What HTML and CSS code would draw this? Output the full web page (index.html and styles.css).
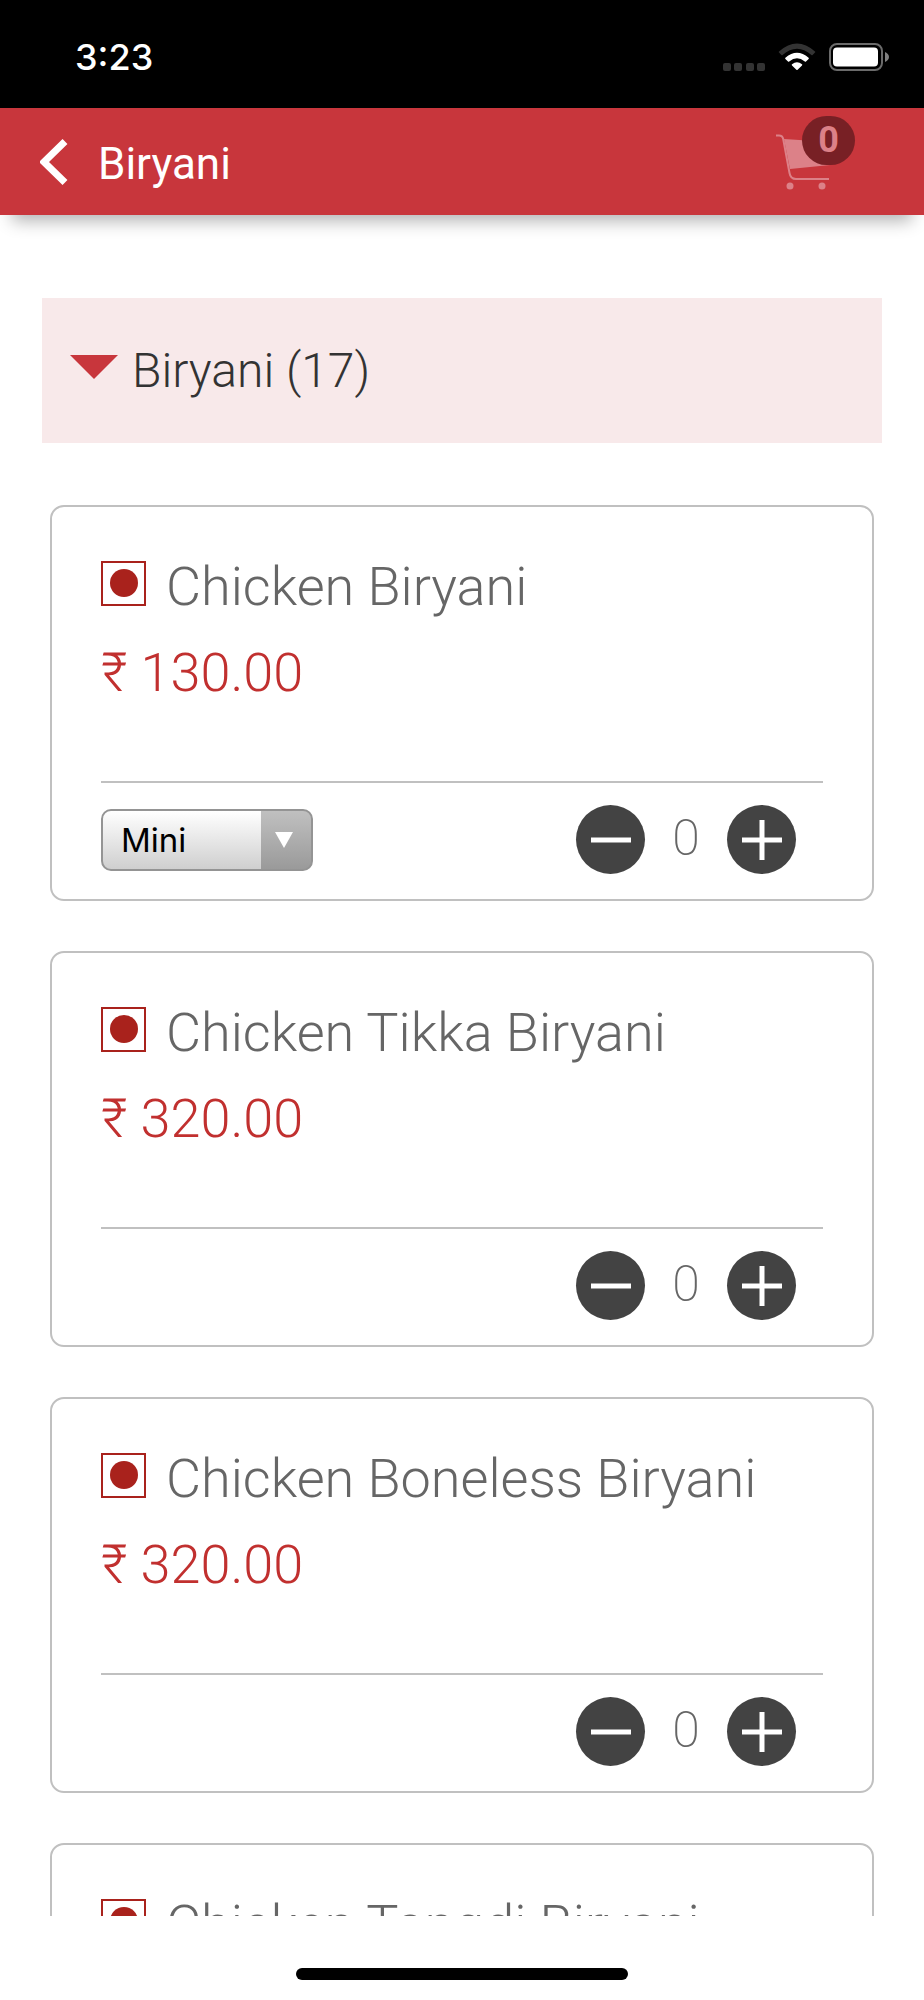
FILE: index.html
```html
<!DOCTYPE html>
<html lang="en">
  <head>
    <meta charset="UTF-8" />
    <meta name="viewport" content="width=device-width, initial-scale=1.0" />
    <title>Biryani</title>
    <link rel="stylesheet" href="styles.css">
  </head>
  <body>
    <div class="status-bar">
      <span class="time">3:23</span>
      <div class="status-icons">
        <svg class="signal" viewBox="0 0 42 8" aria-hidden="true">
          <rect x="0" width="8" height="8" rx="2" />
          <rect x="11" width="8" height="8" rx="2" />
          <rect x="23" width="8" height="8" rx="2" />
          <rect x="34" width="8" height="8" rx="2" />
        </svg>
        <svg class="wifi" viewBox="0 0 38 28" aria-hidden="true">
          <path d="M1 8.500Q19 -7.500 37 8.500Q37.600 9 37 9.600L34.600 12Q34 12.600 33.400 12Q19 -0.500 4.600 12Q4 12.600 3.400 12L1 9.600Q0.400 9 1 8.500Z" fill="#333333" />
          <path d="M7.400 14.800Q19 4.600 30.600 14.800Q31.200 15.400 30.600 16L28 18.600Q27.400 19 26.800 18.500Q19 12 11.200 18.500Q10.600 19 10 18.600L7.400 16Q6.800 15.400 7.400 14.800Z" fill="#ffffff" />
          <path d="M14 21.200Q19 17.200 24 21.200Q24.600 21.800 24 22.400L19.600 26.800Q19 27.400 18.400 26.800L14 22.400Q13.400 21.800 14 21.200Z" fill="#ffffff" />
        </svg>
        <svg class="battery" viewBox="0 0 60 28" aria-hidden="true">
          <rect x="1" y="1" width="52" height="26" rx="7" fill="none" stroke="#6b6b6b" stroke-width="2" />
          <rect x="4" y="4.500" width="45" height="19" rx="4" fill="#ffffff" />
          <path d="M56 9Q60 11 60 14Q60 17 56 19Z" fill="#808080" />
        </svg>
      </div>
    </div>

    <header class="app-bar">
      <button class="back" aria-label="Back">
        <svg viewBox="0 0 28 46" aria-hidden="true">
          <path d="M25 2.500L4 23L25 43.500" />
        </svg>
      </button>
      <h1>Biryani</h1>
      <button class="cart" aria-label="Cart">
        <svg viewBox="0 0 54 56" aria-hidden="true">
          <path d="M8 5L54 8L54 31L14 35Z" fill="#dc8188" />
          <path d="M0 1.500H3Q6.500 1.500 7.200 5L13.500 39Q14.500 45 20 45H53" fill="none" stroke="#dc8188" stroke-width="2" />
          <circle cx="14" cy="52" r="3.500" fill="#dc8188" />
          <circle cx="46" cy="52" r="3.500" fill="#dc8188" />
        </svg>
        <span class="badge">0</span>
      </button>
    </header>

    <main class="menu">
      <button class="category">
        <span class="arrow"></span>
        Biryani (17)
      </button>

      <section class="item">
        <h2><span class="non-veg"></span>Chicken Biryani</h2>
        <p class="price">₹ 130.00</p>
        <div class="item-footer">
          <select class="size" aria-label="Size">
            <option>Mini</option>
          </select>
          <div class="quantity">
            <button class="round" aria-label="Remove one"><svg viewBox="0 0 40 40"><path d="M0 20H40" /></svg></button>
            <span class="count">0</span>
            <button class="round" aria-label="Add one"><svg viewBox="0 0 40 40"><path d="M0 20H40M20 0V40" /></svg></button>
          </div>
        </div>
      </section>

      <section class="item">
        <h2><span class="non-veg"></span>Chicken Tikka Biryani</h2>
        <p class="price">₹ 320.00</p>
        <div class="item-footer">
          <div class="quantity">
            <button class="round" aria-label="Remove one"><svg viewBox="0 0 40 40"><path d="M0 20H40" /></svg></button>
            <span class="count">0</span>
            <button class="round" aria-label="Add one"><svg viewBox="0 0 40 40"><path d="M0 20H40M20 0V40" /></svg></button>
          </div>
        </div>
      </section>

      <section class="item">
        <h2><span class="non-veg"></span>Chicken Boneless Biryani</h2>
        <p class="price">₹ 320.00</p>
        <div class="item-footer">
          <div class="quantity">
            <button class="round" aria-label="Remove one"><svg viewBox="0 0 40 40"><path d="M0 20H40" /></svg></button>
            <span class="count">0</span>
            <button class="round" aria-label="Add one"><svg viewBox="0 0 40 40"><path d="M0 20H40M20 0V40" /></svg></button>
          </div>
        </div>
      </section>

      <section class="item">
        <h2><span class="non-veg"></span>Chicken Tangdi Biryani</h2>
      </section>
    </main>

    <div class="home-area">
      <div class="home-indicator"></div>
    </div>
  </body>
</html>
```

FILE: styles.css
```css
:root {
  --primary: #c8363c;
  --price: #c1302f;
  --non-veg: #a9221c;
  --text: #666666;
  --border: #c0c0c0;
  --icon: #434343;
}

* {
  margin: 0;
  padding: 0;
  box-sizing: border-box;
}

body {
  background: #ffffff;
  color: var(--text);
  font-family: Roboto, sans-serif;
  font-weight: 300;
  height: 100vh;
  display: flex;
  flex-direction: column;
  overflow: hidden;
}

button {
  border: none;
  background: none;
  font: inherit;
  cursor: pointer;
}

svg {
  display: block;
}

.status-bar {
  background: #000000;
  color: #ffffff;
  flex: none;
  height: 108px;
  padding: 5px 35px 0 75px;
  display: flex;
  align-items: center;
  justify-content: space-between;
}

.time {
  font-family: Inter, sans-serif;
  font-size: 36px;
  font-weight: 500;
}

.status-icons {
  display: flex;
  align-items: flex-end;
  gap: 13px;
}

.signal {
  width: 42px;
  height: 8px;
  fill: #333333;
}

.wifi {
  width: 38px;
  height: 28px;
}

.battery {
  width: 60px;
  height: 28px;
}

.app-bar {
  position: relative;
  background: var(--primary);
  color: #ffffff;
  flex: none;
  height: 107px;
  padding: 0 94px 0 40px;
  display: flex;
  align-items: center;
  box-shadow: 0 18px 16px -12px rgba(0, 0, 0, 0.3);
}

.back svg {
  width: 28px;
  height: 46px;
  fill: none;
  stroke: #ffffff;
  stroke-width: 7;
}

h1 {
  font-size: 44px;
  font-weight: 400;
  line-height: 52px;
  margin-left: 30px;
  padding-top: 4px;
}

.cart {
  position: relative;
  margin-left: auto;
}

.cart svg {
  width: 54px;
  height: 56px;
}

.badge {
  position: absolute;
  left: 26px;
  top: -18px;
  width: 53px;
  height: 49px;
  border-radius: 25px;
  background: #782025;
  color: #dc8188;
  font-size: 36px;
  font-weight: 700;
  line-height: 49px;
  text-align: center;
}

.menu {
  flex: 1;
  min-height: 0;
  overflow: hidden;
  padding: 83px 42px 0;
  display: flex;
  flex-direction: column;
}

.category {
  flex: none;
  height: 145px;
  margin-bottom: 62px;
  padding: 0 28px;
  background: #f8e9ea;
  color: #333333;
  font-size: 48px;
  display: flex;
  align-items: center;
  gap: 14px;
}

.arrow {
  border: 24px solid transparent;
  border-top-color: var(--primary);
  border-bottom: none;
  margin-bottom: 8px;
}

.item {
  flex: none;
  height: 396px;
  margin: 0 8px 50px;
  padding: 48px 49px 0;
  border: 2px solid var(--border);
  border-radius: 14px;
}

h2 {
  display: flex;
  align-items: center;
  gap: 20px;
  font-size: 54px;
  font-weight: 300;
  line-height: 64px;
}

.non-veg {
  width: 45px;
  height: 45px;
  margin-bottom: 8px;
  border: 2px solid var(--non-veg);
  display: grid;
  place-items: center;
}

.non-veg::before {
  content: "";
  width: 28px;
  height: 28px;
  border-radius: 50%;
  background: var(--non-veg);
}

.price {
  color: var(--price);
  font-size: 54px;
  line-height: 64px;
  margin-top: 22px;
}

.item-footer {
  display: flex;
  align-items: center;
  margin-top: 76px;
  padding: 22px 27px 0 0;
  border-top: 2px solid var(--border);
}

.size {
  appearance: none;
  width: 212px;
  height: 62px;
  padding: 0 18px;
  border: 2px solid #949494;
  border-radius: 10px;
  color: #000000;
  font-family: Inter, sans-serif;
  font-size: 33px;
  background:
    url("data:image/svg+xml,%3Csvg xmlns='http://www.w3.org/2000/svg' viewBox='0 0 18 16'%3E%3Cpath d='M0 0H18L9 16Z' fill='white'/%3E%3C/svg%3E") right 18px center / 18px 16px no-repeat,
    linear-gradient(#c0c0c0, #9a9a9a) right / 50px 100% no-repeat,
    linear-gradient(#ffffff, #cfcfcf);
}

.quantity {
  margin-left: auto;
  display: flex;
  align-items: center;
}

.round {
  width: 69px;
  height: 69px;
  border-radius: 50%;
  background: var(--icon);
  display: grid;
  place-items: center;
}

.round svg {
  width: 40px;
  height: 40px;
  stroke: #ffffff;
  stroke-width: 5;
}

.count {
  width: 82px;
  padding-bottom: 4px;
  font-size: 50px;
  font-weight: 200;
  line-height: 60px;
  text-align: center;
}

.home-area {
  flex: none;
  height: 84px;
  padding-bottom: 20px;
  display: flex;
  align-items: flex-end;
  justify-content: center;
}

.home-indicator {
  width: 36%;
  height: 12px;
  border-radius: 6px;
  background: #000000;
}
```
